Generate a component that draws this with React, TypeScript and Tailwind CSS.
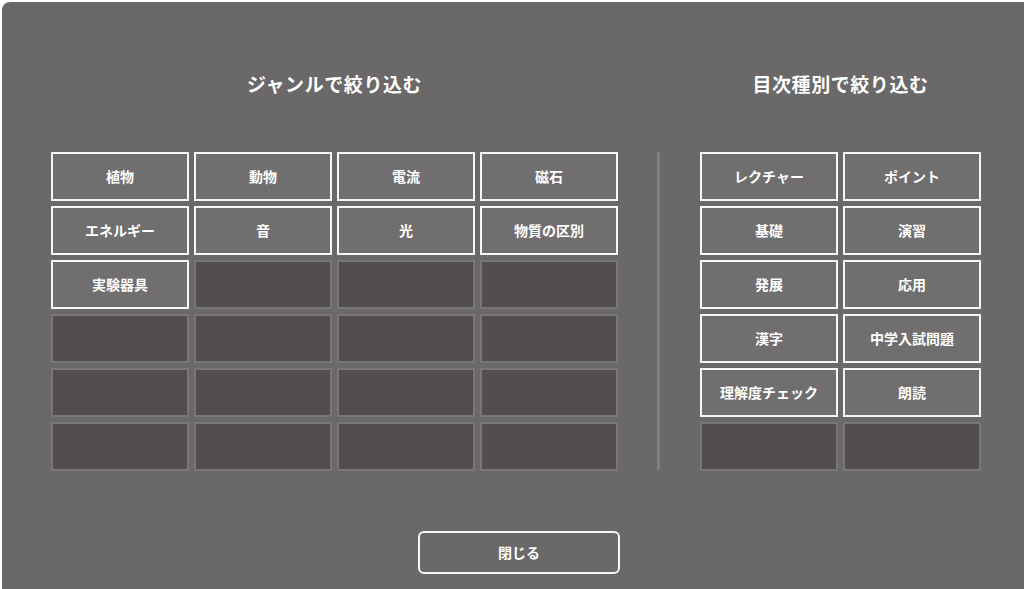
import React from 'react';

const genres = ['植物', '動物', '電流', '磁石', 'エネルギー', '音', '光', '物質の区別', '実験器具'];
const tocTypes = ['レクチャー', 'ポイント', '基礎', '演習', '発展', '応用', '漢字', '中学入試問題', '理解度チェック', '朗読'];

const fill = (items: string[], total: number) =>
  Array.from({ length: total }, (_, i) => items[i] ?? null);

const Cell = ({ label }: { label: string | null }) => {
  if (!label) {
    return <div className="h-[49px] border-2 border-[#787676] bg-[#524e4d]" />;
  }
  return (
    <button className="h-[49px] border-2 border-[#f6f6f6] bg-[#706e6e] text-[14px] font-bold text-white flex items-center justify-center">
      {label}
    </button>
  );
};

const App = () => {
  return (
    <div
      className="w-[1024px] h-[589px] bg-white pl-[2px] pt-[2px] overflow-hidden"
      style={{ fontFamily: '"Noto Sans CJK JP", "Noto Sans", sans-serif' }}
    >
      <div className="h-[587px] bg-[#6a6868] rounded-tl-[8px] flex flex-col">
        <div className="flex pt-[70px]">
          <div className="ml-[49px] w-[567px]">
            <h2 className="h-[24px] leading-[24px] text-center text-[19px] font-bold text-white tracking-[0.03em]">
              ジャンルで絞り込む
            </h2>
            <div className="mt-[56px] grid grid-cols-4 gap-[5px]">
              {fill(genres, 24).map((g, i) => (
                <Cell key={i} label={g} />
              ))}
            </div>
          </div>
          <div className="ml-[39px] mt-[80px] w-[3px] h-[318px] bg-[#7f7d7d]" />
          <div className="ml-[40px] w-[281px]">
            <h2 className="h-[24px] leading-[24px] text-center text-[19px] font-bold text-white tracking-[0.03em]">
              目次種別で絞り込む
            </h2>
            <div className="mt-[56px] grid grid-cols-2 gap-[5px]">
              {fill(tocTypes, 12).map((t, i) => (
                <Cell key={i} label={t} />
              ))}
            </div>
          </div>
        </div>
        <div className="pl-[416px] mt-[60px]">
          <button className="w-[202px] h-[43px] rounded-[6px] border-2 border-[#f6f6f6] bg-[#6a6868] text-[14px] font-bold text-white flex items-center justify-center">
            閉じる
          </button>
        </div>
      </div>
    </div>
  );
};

export default App;
